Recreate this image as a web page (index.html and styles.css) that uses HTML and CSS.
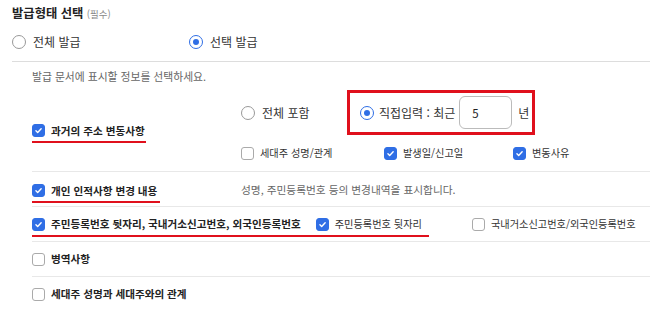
FILE: index.html
```html
<!DOCTYPE html>
<html lang="ko">
<head>
    <meta charset="UTF-8">
    <meta name="viewport" content="width=device-width, initial-scale=1.0">
    <title>발급형태 선택</title>
    <link rel="stylesheet" href="styles.css">
</head>
<body>
<div class="form">
    <h3 class="title">발급형태 선택 <small>(필수)</small></h3>

    <div class="type-row">
        <label class="opt type-all"><span class="radio"></span>전체 발급</label>
        <label class="opt"><span class="radio on"></span>선택 발급</label>
    </div>

    <div class="panel">
        <p class="hint">발급 문서에 표시할 정보를 선택하세요.</p>

        <div class="item item-addr">
            <div class="item-label">
                <span class="mark"><span class="cb on"><svg viewBox="0 0 12 12"><path d="M3.2 6.3l1.9 1.9 3.8-4.2"/></svg></span>과거의 주소 변동사항</span>
            </div>
            <div class="item-body">
                <div class="sub-row sub-top">
                    <label class="opt col-1"><span class="radio"></span>전체 포함</label>
                    <div class="redbox">
                        <label class="opt"><span class="radio on"></span>직접입력 : 최근</label>
                        <span class="year-input">5</span>
                        <span class="unit">년</span>
                    </div>
                </div>
                <div class="sub-row sub-bottom">
                    <label class="opt sm col-1"><span class="cb"></span>세대주 성명/관계</label>
                    <label class="opt sm col-2"><span class="cb on"><svg viewBox="0 0 12 12"><path d="M3.2 6.3l1.9 1.9 3.8-4.2"/></svg></span>발생일/신고일</label>
                    <label class="opt sm"><span class="cb on"><svg viewBox="0 0 12 12"><path d="M3.2 6.3l1.9 1.9 3.8-4.2"/></svg></span>변동사유</label>
                </div>
            </div>
        </div>

        <div class="item">
            <div class="item-label">
                <span class="mark mark-wide"><span class="cb on"><svg viewBox="0 0 12 12"><path d="M3.2 6.3l1.9 1.9 3.8-4.2"/></svg></span>개인 인적사항 변경 내용</span>
            </div>
            <p class="desc">성명, 주민등록번호 등의 변경내역을 표시합니다.</p>
        </div>

        <div class="item">
            <span class="mark mark-long">
                <span class="bold-opt"><span class="cb on"><svg viewBox="0 0 12 12"><path d="M3.2 6.3l1.9 1.9 3.8-4.2"/></svg></span>주민등록번호 뒷자리, 국내거소신고번호, 외국인등록번호</span>
                <label class="opt sm"><span class="cb on"><svg viewBox="0 0 12 12"><path d="M3.2 6.3l1.9 1.9 3.8-4.2"/></svg></span>주민등록번호 뒷자리</label>
            </span>
            <label class="opt sm foreign"><span class="cb"></span>국내거소신고번호/외국인등록번호</label>
        </div>

        <div class="item">
            <span class="bold-opt"><span class="cb"></span>병역사항</span>
        </div>

        <div class="item">
            <span class="bold-opt"><span class="cb"></span>세대주 성명과 세대주와의 관계</span>
        </div>
    </div>
</div>
</body>
</html>
```

FILE: styles.css
```css
* {
  box-sizing: border-box;
}

body {
  margin: 0;
  font-family: "Noto Sans CJK KR", "Noto Sans", sans-serif;
  color: #222;
  background-color: #fff;
}

.form {
  padding: 5px 22px 0 12px;
}

.title {
  margin: 0;
  font-size: 12.3px;
  line-height: 16px;
  font-weight: 700;
}

.title small {
  font-size: 9.5px;
  font-weight: 400;
  color: #888;
}

.type-row {
  display: flex;
  align-items: center;
  height: 40px;
  border-bottom: 1px solid #ddd;
}

.type-all {
  width: 177px;
}

.opt {
  display: inline-flex;
  align-items: center;
  gap: 7px;
  font-size: 12px;
  line-height: 16px;
  color: #333;
}

.opt.sm {
  font-size: 10.2px;
  gap: 6px;
}

.radio {
  width: 14px;
  height: 14px;
  border: 1px solid #999;
  border-radius: 50%;
  display: inline-flex;
  align-items: center;
  justify-content: center;
  background: #fff;
  flex-shrink: 0;
}

.radio.on {
  border-color: #2f6ee5;
}

.radio.on::after {
  content: "";
  width: 6px;
  height: 6px;
  border-radius: 50%;
  background: #2f6ee5;
}

.cb {
  width: 13px;
  height: 13px;
  border: 1px solid #aaa;
  border-radius: 3px;
  display: inline-flex;
  align-items: center;
  justify-content: center;
  background: #fff;
  flex-shrink: 0;
}

.cb.on {
  border-color: #2f6ee5;
  background: #2f6ee5;
}

.cb svg {
  width: 11px;
  height: 11px;
}

.cb svg path {
  fill: none;
  stroke: #fff;
  stroke-width: 1.5;
  stroke-linecap: round;
  stroke-linejoin: round;
}

.panel {
  padding-left: 20px;
}

.hint {
  margin: 7px 0 4px;
  font-size: 10.8px;
  line-height: 14px;
  color: #666;
}

.item {
  display: flex;
  align-items: center;
  height: 35px;
  border-bottom: 1px solid #e8e8e8;
}

.item-addr {
  height: 85px;
}

.item-label {
  width: 209px;
  flex-shrink: 0;
}

.mark {
  position: relative;
  display: inline-flex;
  align-items: center;
  gap: 6px;
  font-size: 10.6px;
  font-weight: 700;
}

/* red annotation underline */
.mark::after {
  content: "";
  position: absolute;
  left: 0;
  right: -1px;
  bottom: -5px;
  height: 2.5px;
  background: #e0101c;
}

.mark-wide::after {
  right: -3px;
}

.mark-long {
  gap: 15px;
}

.mark-long::after {
  right: -7px;
}

.bold-opt {
  display: inline-flex;
  align-items: center;
  gap: 6px;
  font-size: 10.6px;
  line-height: 16px;
  font-weight: 700;
}

.mark-long .opt {
  font-weight: 400;
}

.foreign {
  margin-left: 50px;
}

.item-body {
  padding-top: 3px;
  align-self: stretch;
}

.sub-row {
  display: flex;
  align-items: center;
}

.sub-top {
  height: 45px;
}

.sub-bottom {
  height: 36px;
}

.col-1 {
  width: 106px;
}

.sub-bottom .col-1 {
  width: 143px;
}

.col-2 {
  width: 129px;
}

.redbox {
  display: flex;
  align-items: center;
  height: 45px;
  padding: 0 3px 0 10px;
  border: 3px solid #e0101c;
}

.redbox .opt {
  gap: 5px;
}

.year-input {
  width: 53px;
  height: 33px;
  margin-left: 4px;
  padding-left: 12px;
  border: 1px solid #bbb;
  border-radius: 6px;
  display: flex;
  align-items: center;
  font-size: 11.5px;
}

.unit {
  margin-left: 6px;
  font-size: 12px;
  color: #333;
}

.desc {
  margin: 0;
  font-size: 10.7px;
  color: #666;
}
```
